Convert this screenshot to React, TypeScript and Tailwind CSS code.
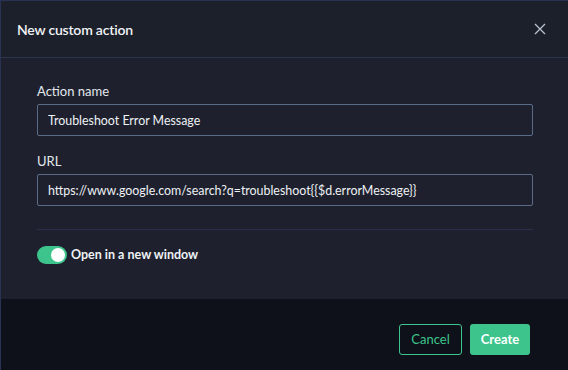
import React, { useState } from 'react';

const Field = ({ label, value }: { label: string; value: string }) => (
  <div className="flex flex-col gap-1">
    <label className="text-[13px] leading-[18px] text-[#e3e7ee]">{label}</label>
    <input
      type="text"
      defaultValue={value}
      className="h-8 w-full rounded-[2px] border border-[#5b6b87] bg-transparent px-[10px] text-[12.4px] text-[#eef1f5] outline-none"
    />
  </div>
);

export default function App() {
  const [open, setOpen] = useState(true);

  return (
    <div
      className="flex h-[370px] w-[568px] flex-col border-l border-t border-[#2a3254] bg-[#1e212d]"
      style={{ fontFamily: 'Lato, "Noto Sans", sans-serif' }}
    >
      {/* header */}
      <div className="flex h-[57px] shrink-0 items-center justify-between border-b border-[#2c3454] bg-[#1c202b] pl-4 pr-[16px]">
        <h2 className="text-[14px] font-semibold tracking-[-0.2px] text-[#f1f3f6]">New custom action</h2>
        <button className="flex h-6 w-6 items-center justify-center text-[#b9c2d0]">
          <svg width="12" height="12" viewBox="0 0 12 12" fill="none" stroke="currentColor" strokeWidth="1.3">
            <path d="M1 1l10 10M11 1L1 11" />
          </svg>
        </button>
      </div>

      {/* body */}
      <div className="flex h-[241px] shrink-0 flex-col pl-9 pr-[35px] pt-6">
        <div className="flex flex-col gap-4">
          <Field label="Action name" value="Troubleshoot Error Message" />
          <Field label="URL" value="https://www.google.com/search?q=troubleshoot{{$d.errorMessage}}" />
        </div>
        <div className="mt-[23px] border-t border-[#2a2f4b]" />
        <label className="mt-4 flex cursor-pointer items-center gap-1">
          <button
            onClick={() => setOpen(!open)}
            className={`relative h-[18px] w-[30px] rounded-full ${open ? 'bg-[#3cc48c]' : 'bg-[#4a5266]'}`}
          >
            <span
              className={`absolute top-[2px] h-[14px] w-[14px] rounded-full bg-white ${open ? 'right-[2px]' : 'left-[2px]'}`}
            />
          </button>
          <span className="text-[12.5px] font-bold text-[#eef1f5]">Open in a new window</span>
        </label>
      </div>

      {/* footer */}
      <div className="flex flex-1 items-start justify-end gap-2 bg-[#0e1119] pr-[38px] pt-[25px]">
        <button className="h-[31px] w-[63px] rounded-[3px] border border-[#3cc48c] text-[13px] text-[#3cc48c]">
          Cancel
        </button>
        <button className="h-[31px] w-[60px] rounded-[3px] bg-[#3cc48c] text-[13px] font-bold text-white">
          Create
        </button>
      </div>
    </div>
  );
}
